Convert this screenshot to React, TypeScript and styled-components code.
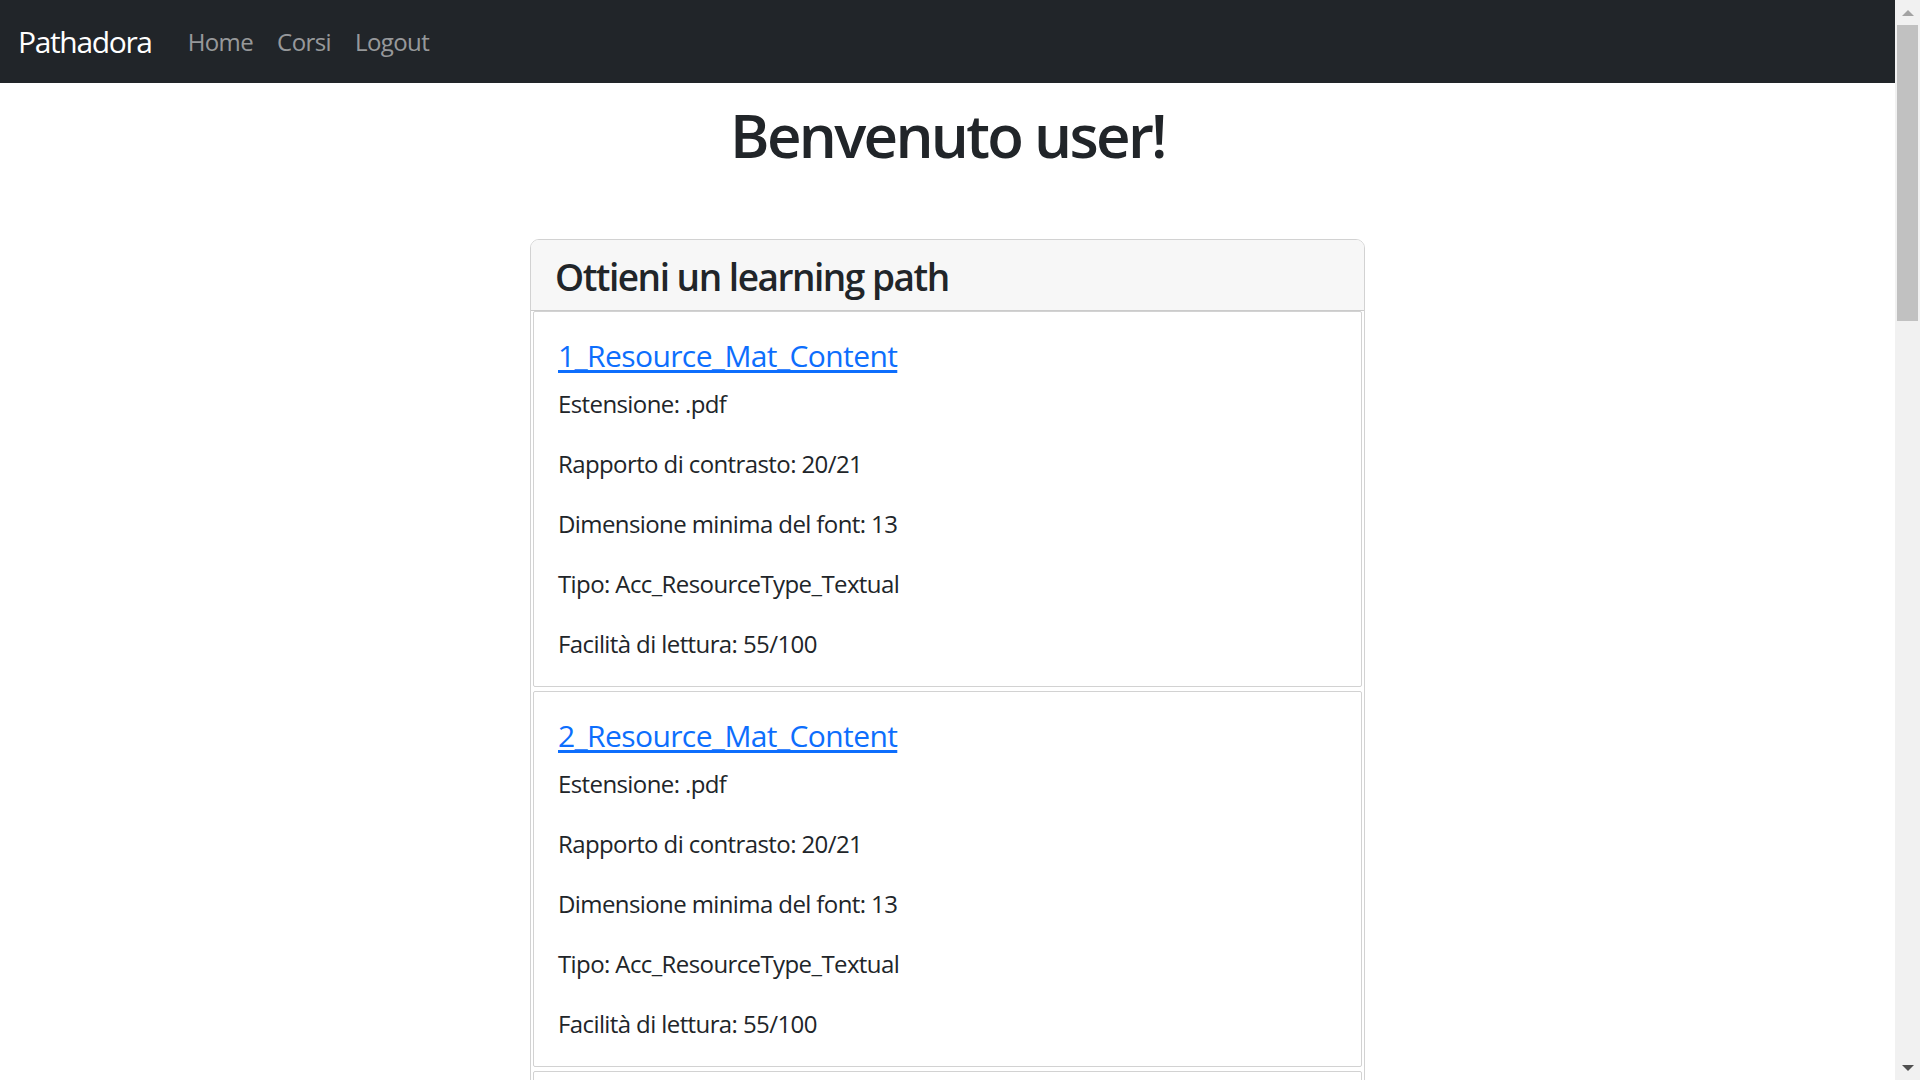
import React from "react";
import styled, { createGlobalStyle } from "styled-components";

const GlobalStyle = createGlobalStyle`
  *, *::before, *::after {
    box-sizing: border-box;
  }

  body {
    margin: 0;
    background: #ffffff;
    color: #212529;
    font-family: "Open Sans", "Noto Sans", sans-serif;
    font-size: 24px;
    line-height: 1.5;
    letter-spacing: -0.025em;
    overflow: hidden;
  }
`;

const Viewport = styled.div`
  display: flex;
  height: 100vh;
  overflow: hidden;
`;

const Page = styled.div`
  flex: 1;
  min-width: 0;
  overflow: hidden;
`;

/* browser scrollbar, drawn since the headless shot has none */
const ScrollRail = styled.div`
  display: flex;
  flex-direction: column;
  width: 25px;
  flex-shrink: 0;
  background-color: #f1f1f1;
`;

const ScrollButton = styled.div<{ $dir: "up" | "down"; $active?: boolean }>`
  display: flex;
  align-items: center;
  justify-content: center;
  height: 25px;
  margin-top: ${({ $dir }) => ($dir === "down" ? "auto" : "0")};

  &::before {
    content: "";
    width: 0;
    height: 0;
    border-left: 6px solid transparent;
    border-right: 6px solid transparent;
    ${({ $dir, $active }) =>
      $dir === "up"
        ? `border-bottom: 6px solid ${$active ? "#505050" : "#a3a3a3"};`
        : `border-top: 6px solid ${$active ? "#505050" : "#a3a3a3"};`}
  }
`;

const ScrollThumb = styled.div`
  height: 296px;
  margin: 0 2px;
  background-color: #c1c1c1;
`;

const Navbar = styled.nav`
  display: flex;
  align-items: center;
  height: 83px;
  padding: 0 18px;
  background-color: #212529;
`;

const Brand = styled.a`
  margin-right: 24px;
  font-size: 30px;
  line-height: 45px;
  letter-spacing: -0.045em;
  color: #ffffff;
  text-decoration: none;
`;

const NavList = styled.ul`
  display: flex;
  margin: 0;
  padding: 0;
  list-style: none;
`;

const NavLink = styled.a`
  display: block;
  padding: 12px;
  font-size: 24px;
  line-height: 36px;
  color: rgba(255, 255, 255, 0.55);
  text-decoration: none;
`;

const Main = styled.main`
  display: flex;
  flex-direction: column;
  align-items: center;
  padding: 16px 0 40px;
`;

const Title = styled.h1`
  margin: 0 0 68px;
  font-size: 60px;
  font-weight: 600;
  line-height: 72px;
  letter-spacing: -0.045em;
`;

const Card = styled.section`
  width: 835px;
  border: 1px solid rgba(0, 0, 0, 0.175);
  border-radius: 9px;
  overflow: hidden;
`;

const CardHeader = styled.header`
  padding: 15px 24px 11px;
  background-color: #f7f7f7;
  border-bottom: 1px solid rgba(0, 0, 0, 0.175);
`;

const CardTitle = styled.h4`
  margin: 0;
  font-size: 37px;
  font-weight: 600;
  line-height: 44px;
  letter-spacing: -0.04em;
`;

const ResourceList = styled.div`
  display: flex;
  flex-direction: column;
`;

const ResourceItem = styled.article`
  margin: 0 2px 4px;
  padding: 26px 24px 24px;
  border: 1px solid rgba(0, 0, 0, 0.175);
  border-radius: 2px;
`;

const ResourceName = styled.h5`
  margin: 0 0 12px;
  font-size: 30px;
  font-weight: 400;
  line-height: 36px;
`;

const ResourceLink = styled.a`
  color: #0d6efd;
  text-decoration: underline;
  text-underline-offset: 3px;
`;

const Field = styled.p`
  margin: 0 0 24px;

  &:last-child {
    margin-bottom: 0;
  }
`;

interface Resource {
  id: number;
  extension: string;
  contrast: string;
  minFont: number;
  type: string;
  readability: string;
}

const resources: Resource[] = Array.from({ length: 3 }, (_, i) => ({
  id: i + 1,
  extension: ".pdf",
  contrast: "20/21",
  minFont: 13,
  type: "Acc_ResourceType_Textual",
  readability: "55/100",
}));

export default function App() {
  return (
    <>
      <GlobalStyle />
      <Viewport>
        <Page>
          <Navbar>
            <Brand href="#">Pathadora</Brand>
            <NavList>
              <li>
                <NavLink href="#">Home</NavLink>
              </li>
              <li>
                <NavLink href="#">Corsi</NavLink>
              </li>
              <li>
                <NavLink href="#">Logout</NavLink>
              </li>
            </NavList>
          </Navbar>
          <Main>
            <Title>Benvenuto user!</Title>
            <Card>
              <CardHeader>
                <CardTitle>Ottieni un learning path</CardTitle>
              </CardHeader>
              <ResourceList>
                {resources.map((r) => (
                  <ResourceItem key={r.id}>
                    <ResourceName>
                      <ResourceLink href="#">{`${r.id}_Resource_Mat_Content`}</ResourceLink>
                    </ResourceName>
                    <Field>Estensione: {r.extension}</Field>
                    <Field>Rapporto di contrasto: {r.contrast}</Field>
                    <Field>Dimensione minima del font: {r.minFont}</Field>
                    <Field>Tipo: {r.type}</Field>
                    <Field>Facilità di lettura: {r.readability}</Field>
                  </ResourceItem>
                ))}
              </ResourceList>
            </Card>
          </Main>
        </Page>
        <ScrollRail>
          <ScrollButton $dir="up" />
          <ScrollThumb />
          <ScrollButton $dir="down" $active />
        </ScrollRail>
      </Viewport>
    </>
  );
}
